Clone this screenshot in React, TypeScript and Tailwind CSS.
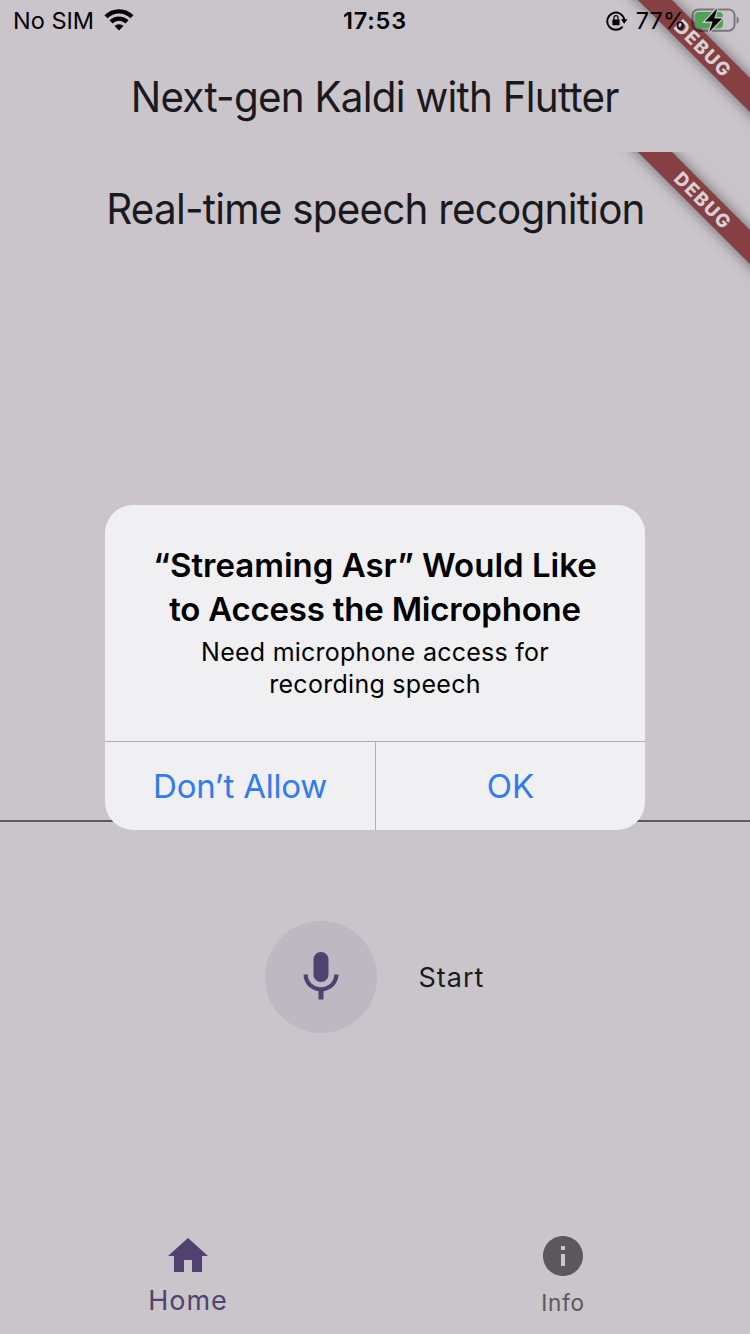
import React from "react";

function DebugBanner({ className }: { className: string }) {
  return (
    <div className={`absolute right-0 size-[150px] overflow-hidden ${className}`}>
      <div className="absolute left-[2.5px] top-[35.5px] flex h-6 w-[200px] rotate-45 items-center justify-center bg-[#863f43] shadow-[0_0_14px_rgba(0,0,0,0.5)]">
        <span className="pl-px text-[18.5px] leading-6 font-extrabold tracking-[1.6px] text-[#d8d2d4]">DEBUG</span>
      </div>
    </div>
  );
}

function Wifi() {
  return (
    <svg width="32" height="24" viewBox="0 0 32 24" className="ml-[8.5px] -mt-px">
      <g fill="none" stroke="#000" strokeWidth="4.4">
        <path d="M3 8.8a18.2 18.2 0 0 1 26 0" />
        <path d="M8 13.9a11.4 11.4 0 0 1 16 0" />
      </g>
      <path d="M16 22.6l-4.5-4.6a6.4 6.4 0 0 1 9 0z" />
    </svg>
  );
}

function RotationLock() {
  return (
    <svg width="22" height="22" viewBox="0 0 22 22">
      <path d="M16.6 16.6A8.6 8.6 0 1 1 18.4 10" fill="none" stroke="#000" strokeWidth="1.9" />
      <path d="M14.8 9.2h6.8l-3.4 4.6z" />
      <rect x="6.4" y="9.4" width="7.2" height="5.8" rx="0.8" />
      <path d="M8 10V7.6a2 2 0 0 1 4 0V10" fill="none" stroke="#000" strokeWidth="1.2" />
    </svg>
  );
}

function Battery() {
  return (
    <svg width="50" height="28" viewBox="0 0 50 28">
      <rect x="1.5" y="2.4" width="42" height="21.4" rx="6" fill="none" stroke="#000" strokeOpacity="0.4" strokeWidth="2" />
      <path d="M45.7 9.6c1.6.6 2.1 1.9 2.1 3.6s-.5 3-2.1 3.6z" fillOpacity="0.4" />
      <rect x="3.9" y="4.9" width="28" height="16.5" rx="3.8" fill="#4fa355" />
      <path d="M26.4 1.2L14 14.6h7.6L18.2 25 31 11.4h-7.8z" stroke="#c9c4c9" strokeWidth="2.6" paintOrder="stroke" />
    </svg>
  );
}

export default function App() {
  return (
    <div className="relative flex h-[1334px] w-[750px] flex-col overflow-hidden bg-[#cac5ca] font-['Inter',sans-serif] text-[#1a191d]">
      <DebugBanner className="top-0" />
      <header className="relative z-10 grid h-10 grid-cols-3 items-center pt-px pl-[13px] text-[23.5px] text-black">
        <div className="flex items-center whitespace-nowrap">
          <span>No SIM</span>
          <Wifi />
        </div>
        <div className="-ml-[13px] text-center font-semibold tracking-[0.8px]">17:53</div>
        <div className="flex items-center justify-end whitespace-nowrap pr-[9px]">
          <RotationLock />
          <span className="ml-[8px]">77%</span>
          <span className="ml-[5px]">
            <Battery />
          </span>
        </div>
      </header>
      <h1 className="flex h-28 items-center justify-center pt-0.5 text-[42.5px] whitespace-nowrap tracking-[-0.8px]">
        <span className="scale-x-95">Next-gen Kaldi with Flutter</span>
      </h1>
      <h2 className="flex h-28 items-center justify-center pt-0.5 text-[42.5px] whitespace-nowrap tracking-[-0.8px]">
        <span className="scale-x-95">Real-time speech recognition</span>
      </h2>
      <DebugBanner className="top-[152px]" />
      <main className="flex grow flex-col">
        <div className="h-[558px] border-b-2 border-[#5e5b60]" />
        <div className="mt-[99px] flex items-center pl-[265px]">
          <div className="flex size-28 items-center justify-center rounded-full bg-[#bdb8c1]">
            <svg width="60" height="60" viewBox="0 0 24 24" fill="#504270">
              <path d="M12 14c1.66 0 2.99-1.34 2.99-3L15 5c0-1.66-1.34-3-3-3S9 3.34 9 5v6c0 1.66 1.34 3 3 3zm5.3-3c0 3-2.54 5.1-5.3 5.1S6.7 14 6.7 11H5c0 3.41 2.72 6.23 6 6.72V21h2v-3.28c3.28-.48 6-3.3 6-6.72h-1.7z" />
            </svg>
          </div>
          <span className="ml-[41.5px] pt-0.5 text-[27px] tracking-[1px]">Start</span>
        </div>
      </main>
      <nav className="grid h-[118px] grid-cols-2 border-t border-[#c8c3c7]">
        <div className="flex flex-col items-center pt-[15px] text-[#504270]">
          <svg width="48" height="48" viewBox="0 0 24 24" fill="currentColor">
            <path d="M10 20v-6h4v6h5v-8h3L12 3 2 12h3v8z" />
          </svg>
          <span className="mt-[3px] pl-px text-[27px] leading-9 tracking-[1px]">Home</span>
        </div>
        <div className="flex flex-col items-center pt-[15px] text-[#5b585c]">
          <svg width="48" height="48" viewBox="0 0 24 24" fill="currentColor">
            <path d="M12 2C6.48 2 2 6.48 2 12s4.48 10 10 10 10-4.48 10-10S17.52 2 12 2zm1 15h-2v-6h2v6zm0-8h-2V7h2v2z" />
          </svg>
          <span className="mt-[5px] pl-px text-[22.5px] leading-9 tracking-[0.8px]">Info</span>
        </div>
      </nav>
      <div
        role="alertdialog"
        className="absolute left-[105px] top-[505px] z-20 flex h-[325px] w-[540px] flex-col overflow-hidden rounded-[28px] bg-[#f0eff2] text-center text-black"
      >
        <div className="flex grow flex-col items-center pt-[38px] whitespace-nowrap">
          <p className="text-[33px] leading-[44px] font-semibold">“Streaming Asr” Would Like</p>
          <p className="text-[33px] leading-[44px] font-semibold tracking-[-0.22px]">to Access the Microphone</p>
          <p className="mt-[5px] text-[25px] leading-8 tracking-[0.24px]">Need microphone access for</p>
          <p className="text-[25px] leading-8 tracking-[0.28px]">recording speech</p>
        </div>
        <div className="flex h-[89px] border-t border-[#afaeb2] text-[33px] text-[#2f7bf6]">
          <div className="flex w-[271px] items-center justify-center border-r border-[#afaeb2] pt-0.5 tracking-[-0.25px]">Don’t Allow</div>
          <div className="flex grow items-center justify-center pt-0.5">OK</div>
        </div>
      </div>
    </div>
  );
}
